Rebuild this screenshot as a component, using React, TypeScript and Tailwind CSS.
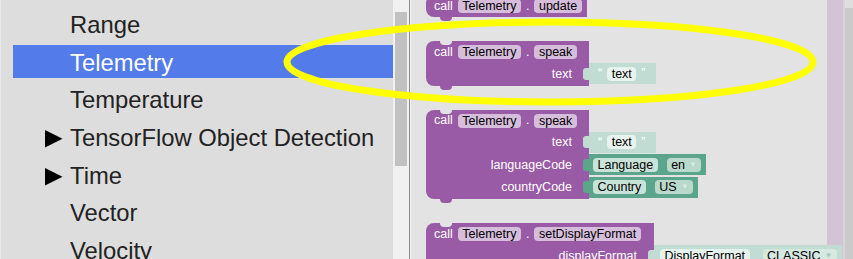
import type { ReactNode } from "react";

const categories = [
  { name: "Range" },
  { name: "Telemetry", selected: true },
  { name: "Temperature" },
  { name: "TensorFlow Object Detection", folder: true },
  { name: "Time", folder: true },
  { name: "Vector" },
  { name: "Velocity" },
];

function Pill({ children, className }: { children: ReactNode; className: string }) {
  return (
    <span className={`flex h-[14px] items-center rounded-[4px] px-[4.5px] leading-[14px] text-black ${className}`}>
      {children}
    </span>
  );
}

function Arrow({ className }: { className: string }) {
  return <span className={`ml-[4px] text-[8px] leading-none ${className}`}>▼</span>;
}

function TextValue() {
  return (
    <div className="flex h-[21px] items-center gap-[5px] bg-[#c1ddd3] pl-[9px] pr-[10px] text-white">
      <span>“</span>
      <Pill className="bg-[#e8f3ef]">text</Pill>
      <span>”</span>
    </div>
  );
}

function EnumValue({ type, value }: { type: string; value: string }) {
  return (
    <div className="flex h-[21px] items-center gap-[9px] bg-[#5ba58c] pl-[4px] pr-[5px]">
      <Pill className="bg-[#cae3d9]">{type}</Pill>
      <Pill className="bg-[#b8d9cb]">
        {value}
        <Arrow className="text-[#d9ece4]" />
      </Pill>
    </div>
  );
}

function FormatValue() {
  return (
    <div className="flex h-[21px] items-center gap-[13px] bg-[#c1ddd3] pl-[6px] pr-[5px]">
      <Pill className="bg-[#e6f2ed]">DisplayFormat</Pill>
      <Pill className="bg-[#d6e9e1]">
        CLASSIC
        <Arrow className="text-[#aac6bb]" />
      </Pill>
    </div>
  );
}

type Row = { label: string; value: ReactNode; tab: string };

function Block({
  method,
  width,
  rows = [],
  extraTop,
}: {
  method: string;
  width: string;
  rows?: Row[];
  extraTop?: boolean;
}) {
  return (
    <div className={`relative flex flex-col items-start ${extraTop ? "-mt-[5px]" : ""}`}>
      <div
        className={`flex h-[22px] items-center gap-[5px] rounded-tl-[8px] bg-[#995ba5] pl-[8px] text-white ${width} ${
          rows.length === 0 ? "rounded-bl-[8px]" : ""
        }`}
      >
        <span>call</span>
        <Pill className="bg-[#d6bddb]">Telemetry</Pill>
        <span>.</span>
        <Pill className="bg-[#d6bddb]">{method}</Pill>
      </div>
      {rows.map((row, i) => (
        <div key={row.label} className="flex h-[22.5px] items-start">
          <div
            className={`flex h-full items-center justify-end bg-[#995ba5] text-white ${width} ${
              i === rows.length - 1 ? "rounded-bl-[8px]" : ""
            }`}
          >
            <span className="pr-[11px]">{row.label}</span>
            <span className={`mt-[-1px] h-[12px] w-[6px] rounded-l-[3px] ${row.tab}`} />
          </div>
          {row.value}
        </div>
      ))}
      {!extraTop && <span className="absolute left-[14px] top-0 h-[4px] w-[12px] rounded-b-[4px] bg-[#e3e3e3]" />}
      <span className="absolute -bottom-[4px] left-[14px] h-[4px] w-[12px] rounded-b-[4px] bg-[#995ba5]" />
    </div>
  );
}

export default function App() {
  return (
    <div className="relative flex h-[259px] w-[853px] overflow-hidden font-['Liberation_Sans',Arial,sans-serif]">
      <aside className="flex w-[393px] flex-col gap-[4.67px] border-l border-[#e9e9e9] bg-[#dddddd] pl-[12px] pt-[7.33px] text-[23.8px] text-[#222]">
        {categories.map((c) => (
          <div
            key={c.name}
            className={`flex h-[33px] shrink-0 items-start whitespace-nowrap pt-[2.7px] leading-[30px] ${
              c.selected ? "bg-[#537bea] text-white" : ""
            }`}
          >
            <span className="flex w-[57px] justify-end pr-[7px] pt-[7px]">
              {c.folder && (
                <svg width="18" height="18" viewBox="0 0 18 18">
                  <polygon points="0,0 17.5,8.7 0,17.5" fill="#000" />
                </svg>
              )}
            </span>
            <span>{c.name}</span>
          </div>
        ))}
      </aside>

      <div className="w-[16px] shrink-0 bg-[#f1f1f1] pl-[2px] pt-[12px]">
        <div className="h-[154px] w-[12px] bg-[#c1c1c1]" />
      </div>
      <div className="w-[1px] shrink-0 bg-[#8a8a8a]" />
      <div className="w-[1px] shrink-0 bg-[#f2f2f2]" />

      <main className="flex min-w-0 flex-1 flex-col items-start gap-[24px] bg-[#e3e3e3] pl-[15px] text-[12.5px]">
        <Block method="update" width="w-[161px]" extraTop />
        <Block
          method="speak"
          width="w-[163px]"
          rows={[{ label: "text", value: <TextValue />, tab: "bg-[#c1ddd3]" }]}
        />
        <Block
          method="speak"
          width="w-[163px]"
          rows={[
            { label: "text", value: <TextValue />, tab: "bg-[#c1ddd3]" },
            { label: "languageCode", value: <EnumValue type="Language" value="en" />, tab: "bg-[#5ba58c]" },
            { label: "countryCode", value: <EnumValue type="Country" value="US" />, tab: "bg-[#5ba58c]" },
          ]}
        />
        <Block
          method="setDisplayFormat"
          width="w-[228px]"
          rows={[{ label: "displayFormat", value: <FormatValue />, tab: "bg-[#c1ddd3]" }]}
        />
      </main>

      <div className="w-[16px] shrink-0 bg-[#d2c4d4]" />
      <div className="flex w-[10px] shrink-0 flex-col border-l-2 border-[#d6d6d6] bg-[#cacaca]">
        <div className="h-[8px] bg-[#dedede]" />
      </div>

      <svg className="pointer-events-none absolute left-0 top-0" width="853" height="259">
        <ellipse cx="550" cy="62" rx="263" ry="40" fill="none" stroke="#ffff00" strokeWidth="7" />
      </svg>
    </div>
  );
}
